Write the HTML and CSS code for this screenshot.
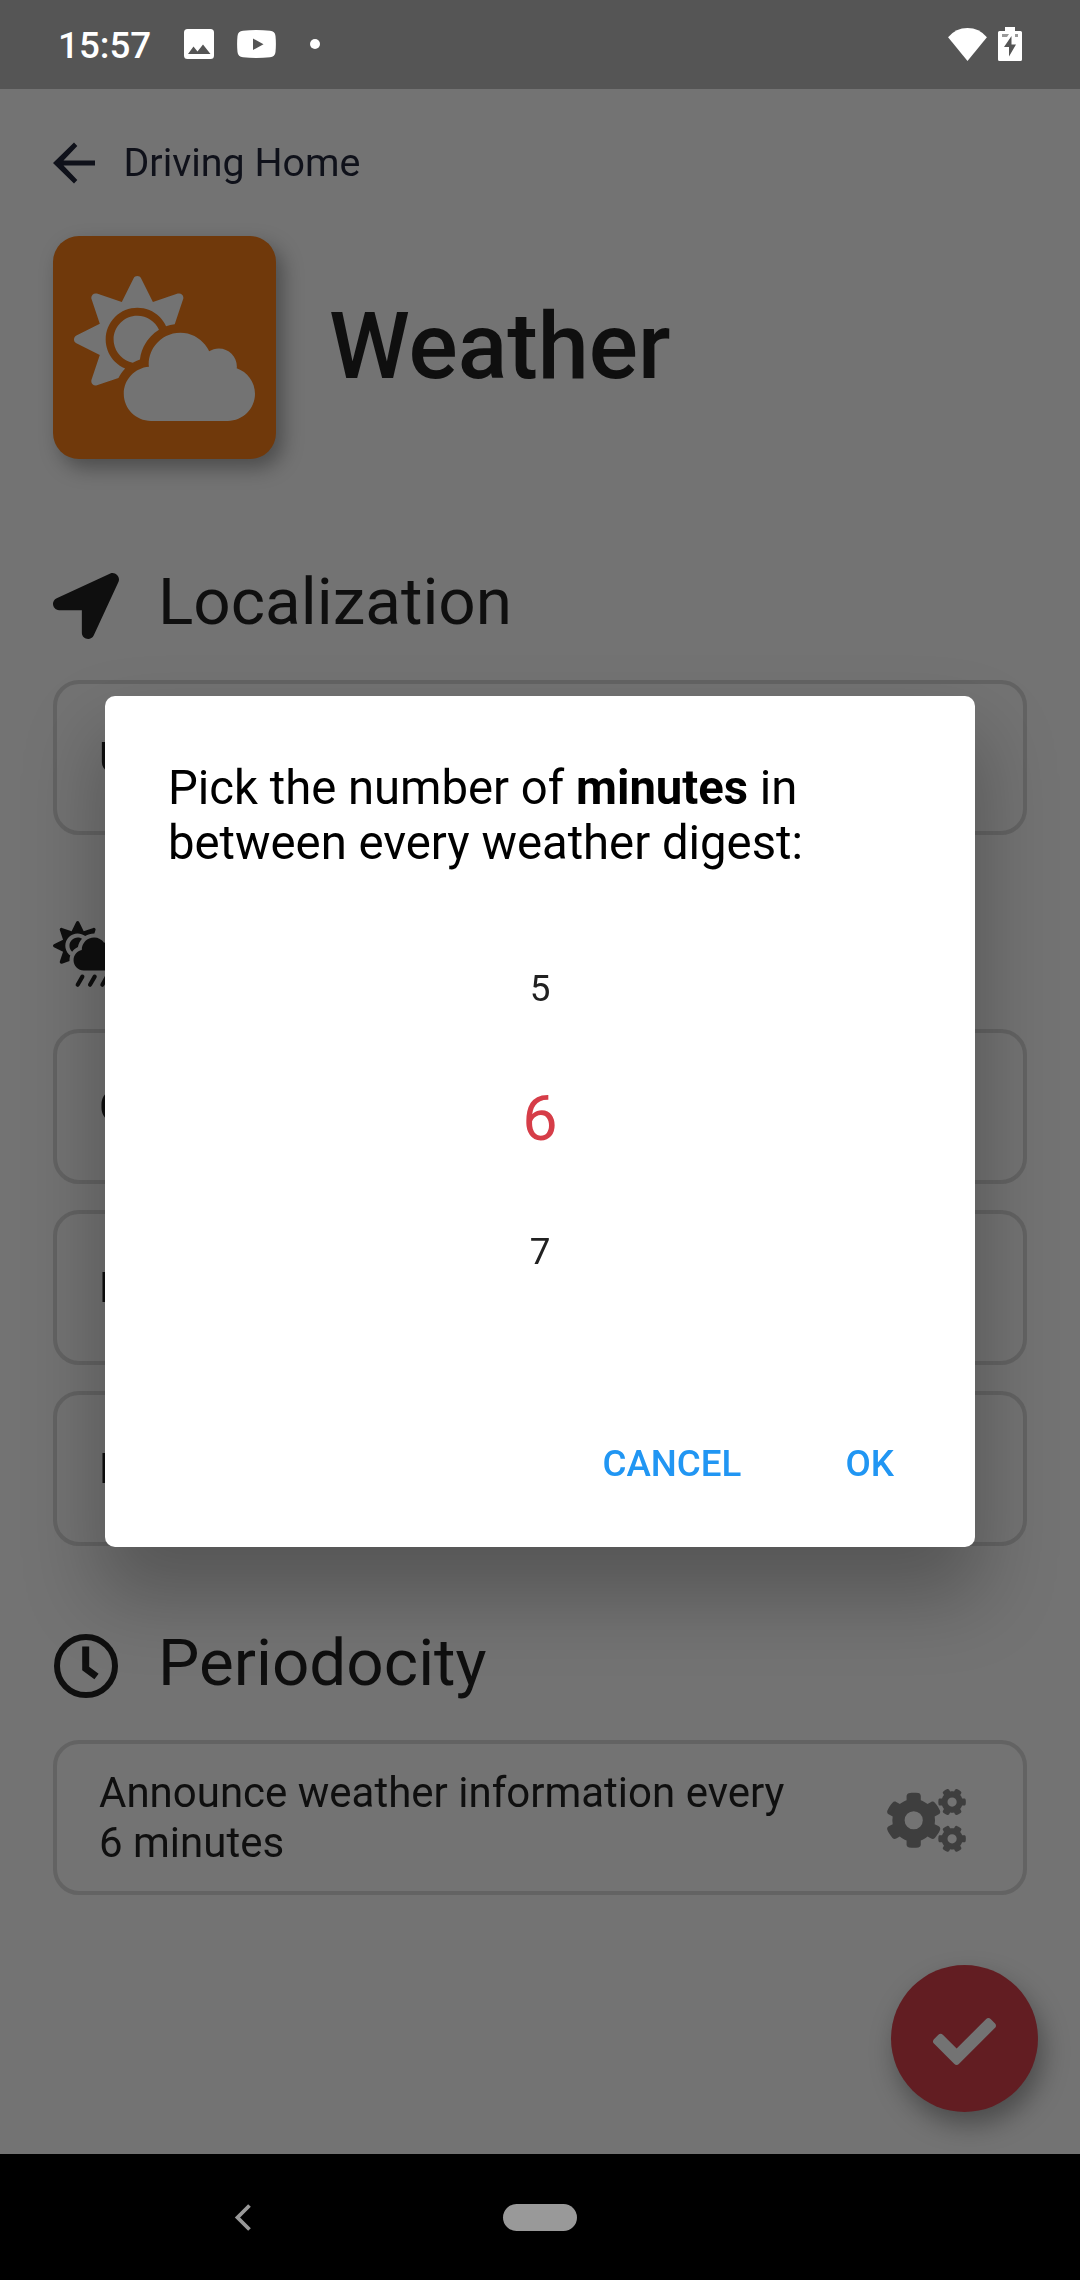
FILE: index.html
```html
<!DOCTYPE html>
<html lang="en">
<head>
<meta charset="utf-8">
<title>Weather</title>
<link rel="stylesheet" href="styles.css">
</head>
<body>
<div class="screen">
  <header class="status">
    <span class="time">15:57</span>
    <svg class="s-photo" viewBox="0 0 30 30"><path fill-rule="evenodd" d="M3.5 0h23A3.5 3.5 0 0 1 30 3.500v23a3.500 3.500 0 0 1-3.500 3.500h-23A3.500 3.500 0 0 1 0 26.500v-23A3.500 3.500 0 0 1 3.500 0zM4 25h22.500L19 15.500l-5.500 7-4-5z"/></svg>
    <svg class="s-video" viewBox="0 0 39 28"><path fill-rule="evenodd" d="M6 .7Q19.500-.5 33 .7q5 .3 5.500 5.300.8 8 0 16-.5 5-5.500 5.300-13.500 1.200-27 0Q1 27 .5 22q-.8-8 0-16Q1 1 6 .7zM16 8.500v11.500l10.500-5.700z"/></svg>
    <span class="dot"></span>
    <svg class="s-wifi" viewBox="0 0 40 34"><path d="M0 9.500Q8 0 20 0t20 9.500L20 34z"/></svg>
    <svg class="s-battery" viewBox="0 0 24 34"><path fill-rule="evenodd" d="M7 0h10v4h5.500q1.500 0 1.500 1.500v27q0 1.500-1.500 1.500h-21Q0 34 0 32.500v-27Q0 4 1.500 4H7zM13.500 9 6 20h5v9.500L18 17.500h-4.500z"/><path class="shade" d="M4 7h7l-2 3H4zM17 7h3v3h-3z"/></svg>
  </header>

  <main class="page">
    <div class="back">
      <svg viewBox="0 0 42 42"><path d="M42 18.400v5.200H10.500L24.300 38 21 41.500 0 21 21 .5l3.300 3.500L10.500 18.400z"/></svg>
      <span>Driving Home</span>
    </div>

    <div class="hero">
      <div class="tile">
        <svg viewBox="0 0 640 512"><path d="M575.2 325.7c.2-1.9.8-3.700.8-5.600 0-35.300-28.700-64-64-64-12.600 0-24.200 3.800-34.100 10-17.600-38.800-56.500-66-101.900-66-61.800 0-112 50.100-112 112 0 3 .7 5.800.9 8.700-49.600 3.700-88.900 44.700-88.900 95.300 0 53 43 96 96 96h272c53 0 96-43 96-96 0-42.100-27.200-77.400-64.800-90.400zm-430.400-22.600c-43.700-43.700-43.700-114.700 0-158.300 43.700-43.700 114.700-43.700 158.400 0 9.700 9.700 16.900 20.900 22.300 32.700 9.800-3.700 20.100-6 30.700-7.500L386 81.100c4-11.900-7.300-23.100-19.200-19.200L279 91.200 237.500 8.400C232-2.800 216-2.800 210.400 8.400L169 91.200 81.100 61.900C69.300 58 58 69.300 61.900 81.100l29.300 87.800-82.800 41.500c-11.200 5.600-11.200 21.500 0 27.100l82.800 41.400-29.300 87.800c-4 11.900 7.300 23.100 19.200 19.200l76.100-25.300c6.100-12.400 14-23.700 23.600-33.500-13.100-5.400-25.400-13.400-36-24zm-4.800-79.200c0 40.800 29.300 74.800 67.900 82.300 8-4.700 16.300-8.800 25.200-11.700 5.400-44.300 31-82.500 67.400-105C287.300 160.400 258 140 224 140c-46.300 0-84 37.600-84 83.900z"/></svg>
      </div>
      <h1>Weather</h1>
    </div>

    <section class="localization">
      <h2>
        <svg class="i-arrow" viewBox="0 0 512 512"><path d="M444.520 3.520L28.740 195.420c-47.970 22.390-31.980 92.750 19.190 92.750h175.910v175.910c0 51.170 70.360 67.170 92.750 19.190l191.900-415.780c15.990-38.380-25.590-79.970-63.970-63.970z"/></svg>
        <span>Localization</span>
      </h2>
      <div class="card"><span>U</span></div>
    </section>

    <section class="content">
      <h2>
        <svg class="i-rain" viewBox="0 0 576 512"><path d="M510.500 225.500c-6.900-37.200-39.300-65.500-78.500-65.500-12.300 0-23.900 3-34.300 8-17.400-24.100-45.600-40-77.700-40-53 0-96 43-96 96 0 .5.2 1.100.2 1.600C187.600 233 160 265.200 160 304c0 44.200 35.800 80 80 80h256c44.200 0 80-35.800 80-80 0-39.200-28.200-71.700-65.500-78.500zm-386.400 34.400c-37.400-37.400-37.400-98.300 0-135.800 34.600-34.600 89.100-36.800 126.700-7.400 20-12.900 43.600-20.700 69.200-20.700.7 0 1.300.2 2 .2l8.900-26.700c3.400-10.200-6.300-19.800-16.500-16.400l-75.300 25.100-35.500-71c-4.800-9.600-18.500-9.600-23.300 0l-35.500 71-75.300-25.100c-10.200-3.400-19.800 6.300-16.400 16.500l25.100 75.300-71 35.500c-9.600 4.800-9.600 18.500 0 23.300l71 35.500-25.100 75.300c-3.400 10.200 6.300 19.800 16.500 16.500l59.200-19.700c-.2-2.400-.7-4.700-.7-7.200 0-12.500 2.300-24.500 6.200-35.900-3.600-2.700-7.100-5.200-10.200-8.300zm69.800-58c4.300-24.500 15.800-46.400 31.900-64-9.800-6.200-21.400-9.900-33.800-9.900-35.300 0-64 28.700-64 64 0 18.700 8.200 35.400 21.100 47.100 11.300-15.900 26.600-28.900 44.800-37.200z"/><path class="drops" d="M228.600 432 192 496M324.600 432 288 496M420.600 432 384 496M516.600 432 480 496"/></svg>
      </h2>
      <div class="card"><span>C</span></div>
      <div class="card"><span>H</span></div>
      <div class="card"><span>H</span></div>
    </section>

    <section class="period">
      <h2>
        <svg class="i-clock" viewBox="0 0 64 64"><circle cx="32" cy="32" r="29"/><path d="M31.700 12.500V34.500L42.500 42.500"/></svg>
        <span>Periodocity</span>
      </h2>
      <div class="card">
        <span>Announce weather information every<br>6 minutes</span>
        <svg class="i-cogs" viewBox="0 0 640 512"><path fill-rule="evenodd" d="M386.300 286.100l33.700 16.800c10.100 5.800 14.500 18.100 10.500 29.100-8.900 24.200-26.400 46.400-42.600 65.800-7.400 8.900-20.200 11.100-30.300 5.300l-29.100-16.800c-16 13.700-34.600 24.600-54.900 31.700v33.600c0 11.600-8.300 21.600-19.700 23.600-24.600 4.200-50.400 4.400-75.900 0-11.500-2-20-11.900-20-23.600V418c-20.300-7.200-38.900-18-54.900-31.700L74 403c-10 5.800-22.900 3.600-30.300-5.300-16.200-19.400-33.300-41.600-42.200-65.700-4-10.900.4-23.200 10.500-29.100l33.300-16.800c-3.900-20.900-3.900-42.400 0-63.400L12 205.800c-10.100-5.800-14.600-18.100-10.500-29 8.900-24.200 26-46.400 42.200-65.800 7.400-8.900 20.200-11.100 30.300-5.300l29.100 16.800c16-13.700 34.600-24.600 54.900-31.700V57.100c0-11.500 8.200-21.500 19.600-23.500 24.600-4.200 50.500-4.400 76-.1 11.500 2 20 11.900 20 23.600v33.600c20.300 7.200 38.900 18 54.900 31.700l29.100-16.800c10-5.800 22.900-3.600 30.300 5.300 16.200 19.400 33.200 41.600 42.100 65.800 4 10.900.1 23.200-10 29.100l-33.700 16.800c3.900 21 3.900 42.500 0 63.500zM142 254a74 74 0 1 0 148 0a74 74 0 1 0-148 0z"/><path id="cog" fill-rule="evenodd" d="M512.100 191l-8.200 14.300c-3 5.300-9.400 7.500-15.100 5.400-11.800-4.400-22.600-10.700-32.100-18.600-4.600-3.800-5.800-10.500-2.800-15.700l8.200-14.300c-6.900-8-12.300-17.300-15.900-27.400h-16.500c-6 0-11.200-4.300-12.200-10.300-2-12-2.100-24.600 0-37.100 1-6 6.200-10.400 12.200-10.400h16.500c3.600-10.100 9-19.400 15.900-27.400l-8.200-14.300c-3-5.200-1.900-11.900 2.800-15.700 9.500-7.900 20.400-14.200 32.100-18.600 5.700-2.100 12.100.1 15.100 5.400l8.200 14.300c10.500-1.900 21.200-1.900 31.700 0L552 6.300c3-5.300 9.400-7.500 15.100-5.400 11.800 4.400 22.600 10.700 32.100 18.600 4.600 3.800 5.800 10.500 2.800 15.700l-8.200 14.300c6.900 8 12.300 17.300 15.900 27.400h16.500c6 0 11.200 4.300 12.200 10.300 2 12 2.100 24.600 0 37.100-1 6-6.200 10.400-12.200 10.400h-16.500c-3.600 10.100-9 19.400-15.900 27.400l8.200 14.300c3 5.200 1.900 11.900-2.800 15.700-9.500 7.900-20.400 14.200-32.100 18.600-5.700 2.100-12.100-.1-15.100-5.400l-8.200-14.300c-10.400 1.900-21.200 1.900-31.700 0zM490.500 105.800a37.500 37.500 0 1 0 75 0a37.500 37.500 0 1 0-75 0z"/><use href="#cog" y="299"/></svg>
      </div>
    </section>

    <div class="fab">
      <svg viewBox="0 0 512 512"><path d="M173.898 439.404l-166.400-166.400c-9.997-9.997-9.997-26.206 0-36.204l36.203-36.204c9.997-9.998 26.207-9.998 36.204 0L192 312.690 432.095 72.596c9.997-9.997 26.207-9.997 36.204 0l36.203 36.204c9.997 9.997 9.997 26.206 0 36.204l-294.400 294.401c-9.998 9.997-26.207 9.997-36.204-.001z"/></svg>
    </div>
  </main>

  <nav class="navbar">
    <svg viewBox="0 0 16 27"><path d="M14.500 1.500 2.500 13.500 14.500 25.500"/></svg>
    <span class="pill"></span>
  </nav>

  <div class="dialog" role="dialog">
    <p class="title">Pick the number of <b>minutes</b> in<br>between every weather digest:</p>
    <div class="picker">
      <span>5</span>
      <span class="selected">6</span>
      <span>7</span>
    </div>
    <div class="actions"><span>CANCEL</span><span>OK</span></div>
  </div>
</div>
</body>
</html>
```
FILE: styles.css
```css
* { box-sizing: border-box; }

body {
  margin: 0;
  font-family: Roboto, "Noto Sans", sans-serif;
  color: #0f0f0f;
}

svg { display: block; flex: none; overflow: visible; }

.screen {
  position: relative;
  width: 1080px;
  height: 2280px;
  display: flex;
  flex-direction: column;
  overflow: hidden;
  background: #737373;
}

/* status bar */
.status {
  flex: none;
  height: 89px;
  display: flex;
  align-items: center;
  padding: 0 58px 1px;
  background: #555;
  color: #fff;
  fill: #fff;
}
.time { width: 126px; font-size: 36.75px; font-weight: 500; line-height: 43px; padding-top: 3px; }
.s-photo { width: 30px; height: 30px; }
.s-video { width: 39px; height: 28px; margin-left: 23px; }
.dot { width: 10px; height: 10px; border-radius: 50%; background: #fff; margin-left: 34px; }
.s-wifi { width: 39px; height: 33px; margin-left: auto; }
.s-battery { width: 24px; height: 34px; margin-left: 11px; }
.shade { fill: #999; }

/* page */
.page {
  position: relative;
  flex: 1;
  min-height: 0;
  padding: 0 53px;
  fill: #0f0f0f;
  will-change: transform;
}
.back {
  height: 147px;
  display: flex;
  align-items: center;
  gap: 28.5px;
  font-size: 39.375px;
  color: #0f111a;
  fill: #0f111a;
}
.back svg { width: 42px; height: 42px; }
.hero { display: flex; align-items: center; height: 223px; }
.tile {
  width: 223px;
  height: 223px;
  padding: 40px 0 0 21px;
  border-radius: 26px;
  background: #70390b;
  fill: #737373;
  box-shadow: 7px 9px 20px rgba(0, 0, 0, .34);
}
.tile svg { width: 181px; height: 145px; }
h1 { margin: 0 0 0 53px; padding-bottom: 1px; font-size: 91.875px; font-weight: 500; line-height: 108px; }
h2 {
  margin: 0;
  height: 86px;
  display: flex;
  align-items: center;
  font-size: 65.625px;
  font-weight: 400;
}
h2 svg { margin-right: 39px; }
h2 span { padding-bottom: 5px; }
.period h2 span { padding-bottom: 3px; }
section { display: flex; flex-direction: column; gap: 26px; }
.localization { margin-top: 102px; }
.localization h2, .period h2 { margin-bottom: 7px; }
.content { margin-top: 76px; }
.content h2 { margin-bottom: 6px; }
.period { margin-top: 75px; }
.i-arrow { width: 66px; height: 66px; margin-top: 4px; }
.i-rain { width: 74px; height: 66px; }
.drops { fill: none; stroke: #0f0f0f; stroke-width: 32; stroke-linecap: round; }
.i-clock { width: 64px; height: 64px; margin: 4px 40px 0 1px; fill: none; stroke: #0f0f0f; stroke-width: 6; }
.i-clock path { stroke-width: 7; }
.card {
  height: 155px;
  display: flex;
  align-items: center;
  justify-content: space-between;
  padding: 0 57px 0 42px;
  border: 4px solid #636363;
  border-radius: 26px;
  font-size: 42px;
  line-height: 50px;
}
.i-cogs { width: 79px; height: 63px; margin-top: 5px; fill: #3e3e3e; }

.fab {
  position: absolute;
  right: 42px;
  bottom: 42px;
  width: 147px;
  height: 147px;
  padding: 45px 0 0 42px;
  border-radius: 50%;
  background: #621d22;
  fill: #737373;
  box-shadow: 5px 13px 26px rgba(0, 0, 0, .35);
}
.fab svg { width: 63px; height: 63px; }

/* navigation bar */
.navbar {
  flex: none;
  height: 126px;
  display: flex;
  align-items: center;
  padding-left: 235px;
  background: #000;
  z-index: 1;
}
.navbar svg { width: 16px; height: 27px; fill: none; stroke: #999; stroke-width: 3.800; }
.pill { width: 74px; height: 27px; margin-left: 252px; border-radius: 14px; background: #999; }

/* dialog */
.dialog {
  position: absolute;
  left: 105px;
  top: 696px;
  width: 870px;
  height: 851px;
  display: flex;
  flex-direction: column;
  padding: 65px 63px 62px;
  border-radius: 10px;
  background: #fff;
  box-shadow: 0 44px 76px 6px rgba(0, 0, 0, .25);
}
.title { margin: 0; font-size: 47.25px; line-height: 55.4px; color: #000; }
.picker { margin-top: 51px; display: flex; flex-direction: column; text-align: center; }
.picker span { height: 131px; line-height: 131px; font-size: 36.75px; color: #212121; }
.picker .selected { height: 132px; line-height: 129px; font-size: 63px; color: #d63d48; }
.actions {
  margin-top: auto;
  display: flex;
  justify-content: flex-end;
  gap: 104px;
  padding: 0 18px 0 0;
  font-size: 36.75px;
  line-height: 43px;
  font-weight: 500;
  color: #2196f3;
}
```
